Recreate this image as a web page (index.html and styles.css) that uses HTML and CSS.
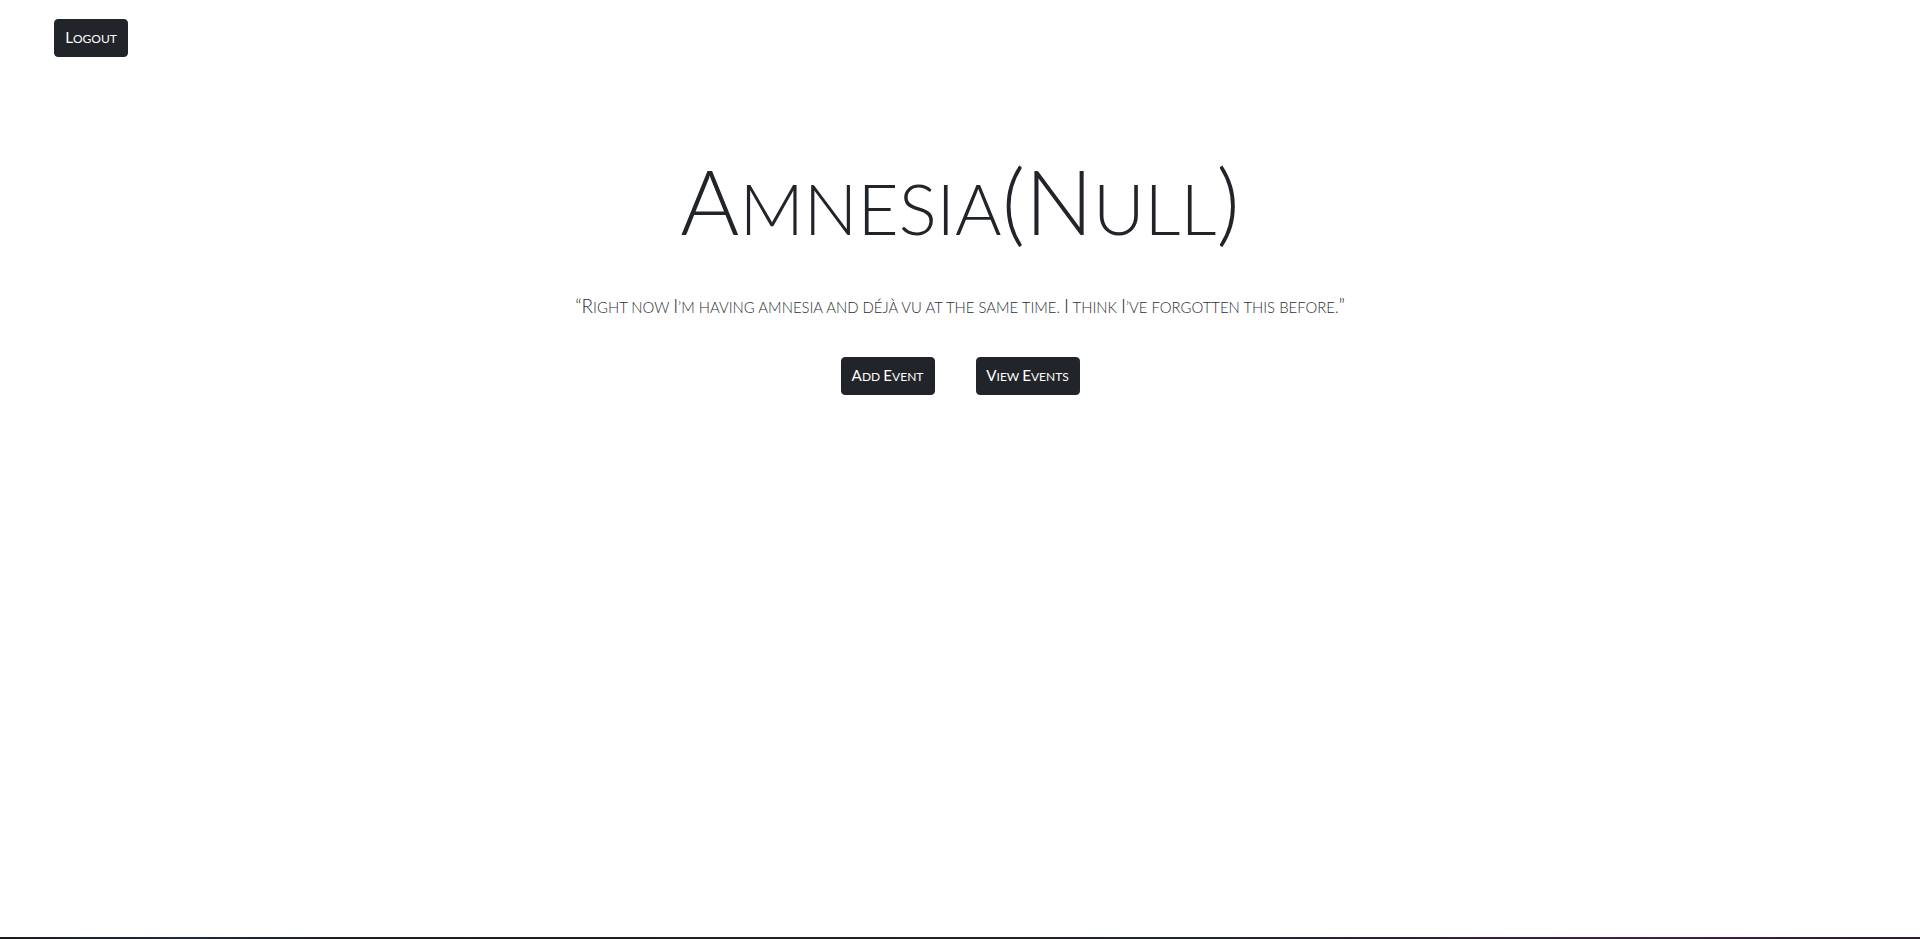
FILE: index.html
```html
<!DOCTYPE html>
<html lang="en">
<head>
<meta charset="utf-8">
<title>Amnesia(Null)</title>
<link rel="stylesheet" href="styles.css">
</head>
<body>
<header class="topbar">
  <button class="btn btn-dark btn-logout"><span class="label"><span class="cap">L</span>ogout</span></button>
</header>
<main class="hero">
  <h1 class="title"><span class="cap">A</span>mnesia<span class="cap">(N</span>ull<span class="cap">)</span></h1>
  <p class="quote"><span class="cap">“R</span>ight now <span class="cap">I</span>’m having amnesia and déjà vu at the same time. <span class="cap">I</span> think <span class="cap">I</span>’ve forgotten this before.<span class="cap">”</span></p>
  <div class="actions">
    <button class="btn btn-dark btn-add"><span class="label"><span class="cap">A</span>dd <span class="cap">E</span>vent</span></button>
    <button class="btn btn-dark btn-view"><span class="label"><span class="cap">V</span>iew <span class="cap">E</span>vents</span></button>
  </div>
</main>
<div class="bottom-strip"></div>
</body>
</html>
```
FILE: styles.css
```css
html, body {
  margin: 0;
  padding: 0;
}
body {
  min-height: 100vh;
  display: flex;
  flex-direction: column;
  background: #ffffff;
  color: #212529;
  font-family: "Lato", "Open Sans", sans-serif;
  font-weight: 300;
}
.cap {
  font-size: 1.27em;
}
.topbar {
  padding: 19px 0 0 54px;
  height: 38px;
}
.btn {
  box-sizing: border-box;
  border: 1px solid #212529;
  border-radius: 4px;
  background: #212529;
  color: #ffffff;
  font-family: "Lato", "Open Sans", sans-serif;
  font-weight: 400;
  font-size: 12px;
  text-transform: uppercase;
  padding: 0;
  line-height: 1;
  display: inline-flex;
  align-items: center;
  justify-content: center;
  cursor: pointer;
}
.label {
  white-space: nowrap;
}
.btn-logout {
  width: 74px;
  height: 38px;
}
.hero {
  flex: 1;
  display: flex;
  flex-direction: column;
  align-items: center;
  padding-top: 98px;
}
.title {
  margin: 0;
  font-size: 71px;
  font-weight: 300;
  line-height: 1;
  text-transform: uppercase;
  letter-spacing: 0;
}
.quote {
  margin: 52px 0 0;
  font-size: 14.9px;
  line-height: 1;
  text-transform: uppercase;
  color: #2b2f33;
}
.actions {
  margin-top: 41px;
  display: flex;
  gap: 41px;
}
.btn-add {
  width: 94px;
  height: 38px;
}
.btn-view {
  width: 104px;
  height: 38px;
}
.bottom-strip {
  height: 2px;
  background: linear-gradient(90deg, #1c1c1c 0%, #232a3a 10%, #1e1e1e 18%, #222222 50%, #22262c 62%, #2a2230 72%, #3b2440 85%, #2a1e2c 100%);
}
```
